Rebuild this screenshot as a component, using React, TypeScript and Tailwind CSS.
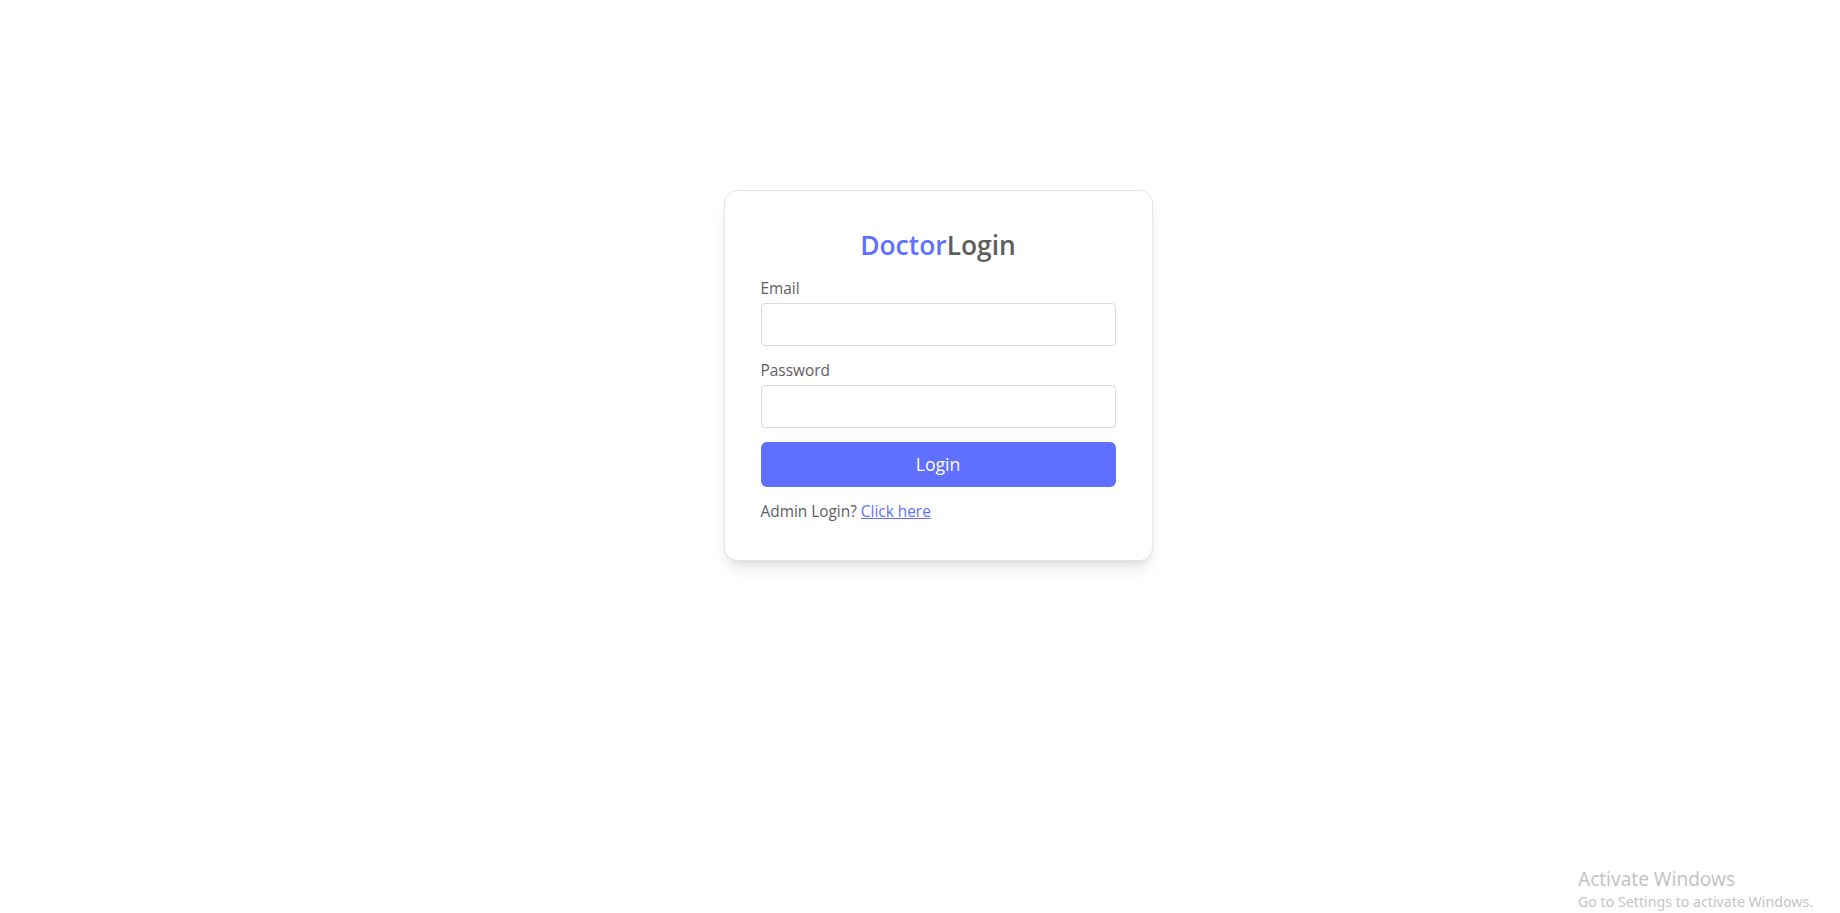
import React, { useState } from 'react';

export default function App() {
  const [email, setEmail] = useState('');
  const [password, setPassword] = useState('');

  return (
    <div className="min-h-[913px] bg-white font-['Open_Sans','Noto_Sans',sans-serif] relative">
      <div className="flex justify-center pt-[190px] pl-[36px]">
        <form
          onSubmit={(e) => e.preventDefault()}
          className="flex flex-col gap-[14px] items-start w-[429px] px-[36px] pt-[36px] pb-[37px] border border-[#e6e6e6] rounded-[13px] text-[#5E5E5E] text-[15.4px] shadow-lg bg-white"
        >
          <p className="text-[26.4px] leading-[37px] font-semibold m-auto">
            <span className="text-[#5F6FFF]">Doctor</span>Login
          </p>
          <div className="w-full">
            <p className="leading-[22px]">Email</p>
            <input
              type="email"
              value={email}
              onChange={(e) => setEmail(e.target.value)}
              className="border border-[#DADADA] rounded-[4px] w-full p-[8.8px] mt-[3px] leading-[22px] h-[43px] outline-none"
            />
          </div>
          <div className="w-full">
            <p className="leading-[22px]">Password</p>
            <input
              type="password"
              value={password}
              onChange={(e) => setPassword(e.target.value)}
              className="border border-[#DADADA] rounded-[4px] w-full p-[8.8px] mt-[3px] leading-[22px] h-[43px] outline-none"
            />
          </div>
          <button className="bg-[#5F6FFF] text-white w-full h-[45px] rounded-[6px] text-[17.6px]">Login</button>
          <p className="leading-[22px]">
            Admin Login? <span className="text-[#5F6FFF] underline cursor-pointer">Click here</span>
          </p>
        </form>
      </div>

      <div className="absolute right-[27px] bottom-[0px] text-[#c4c4c4] font-['Noto_Sans',sans-serif]">
        <p className="text-[19px] leading-[24px]">Activate Windows</p>
        <p className="text-[14.2px] leading-[22px]">Go to Settings to activate Windows.</p>
      </div>
    </div>
  );
}
